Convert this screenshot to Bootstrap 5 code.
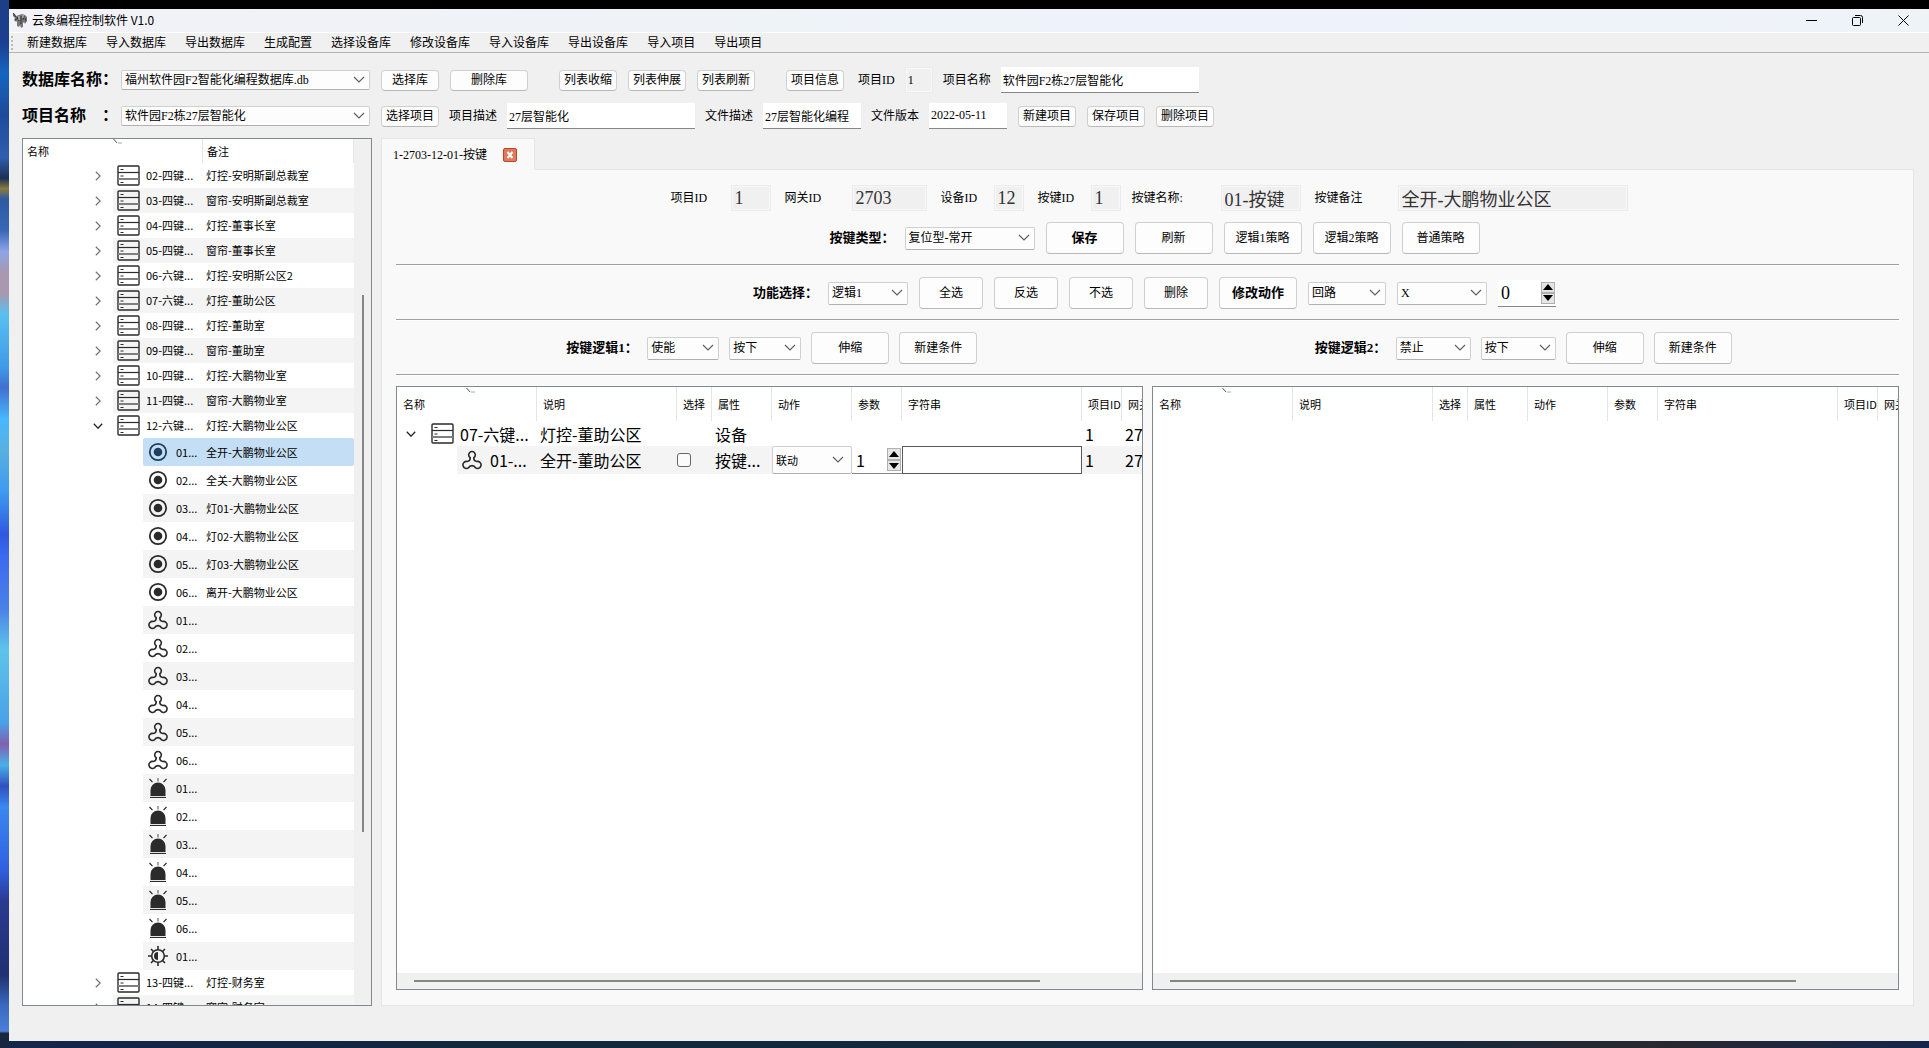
<!DOCTYPE html>
<html lang="zh-CN">
<head>
<meta charset="utf-8">
<meta name="viewport" content="width=device-width, initial-scale=1">
<title>云象编程控制软件 V1.0</title>
<link href="https://cdn.jsdelivr.net/npm/bootstrap@5.3.0/dist/css/bootstrap.min.css" rel="stylesheet">
<style>
  :root {
    --song: "Liberation Serif", "Noto Sans CJK SC", serif;
    --hei: "Noto Sans CJK SC", "Noto Sans", sans-serif;
  }
  body { margin: 0; font-family: var(--song); font-size: 12px; line-height: 16px; color: #000; }

  /* desktop behind the window */
  .desktop {
    height: 100vh; padding: 9px 0 7px 9px; overflow: hidden;
    background:
      linear-gradient(#000, #000) 9px 0 / 100% 9px no-repeat,
      linear-gradient(90deg, #14264a, #12283c 25%, #122a40 70%, #2a2830 85%, #14264a) 9px 100% / 100% 7px no-repeat,
      linear-gradient(#1c3f86 0, #1b3f90 4%, #1565c0 7%, #1e4a9a 11%, #2f5fb0 15%, #1b2f55 17%, #8a7a40 18%, #2d5aa0 19%, #3a66b8 22%, #8ea4e8 24%, #a898b0 26%, #a898b0 28%, #5ac0f0 30%, #3f9ae8 35%, #4070d0 37%, #48b8ff 40%, #58b0e0 43%, #3d9af0 47%, #3058e0 51%, #3a6af0 53%, #4a80e8 58%, #5ec4ea 62%, #4aa0e8 69%, #8060b0 71%, #4ab0e8 73%, #3050c0 75%, #3a88f0 77%, #3060e0 83%, #2a3a90 86%, #203070 93%, #3a6ac0 96%, #4a80d8 98.4%, #1a2540 98.6%);
  }
  .app-window { height: 100%; background: #f0f0f0; }

  .title-bar { height: 24px; padding: 0 3px; background: linear-gradient(90deg, #f2f2f8, #eef3f8 40%, #eef2fb 60%, #eef3f8); border-bottom: 1px solid #fff; font-family: var(--hei); }
  .caption-btn { width: 46px; height: 20px; padding: 0; border: 0; background: none; line-height: 0; color: #000; }
  .menu-strip { height: 21px; gap: 19px; padding: 2px 0 0 2px; border-bottom: 1px solid #b4b4b4; }
  .menu-strip a { color: #000; text-decoration: none; }
  .grip { width: 2px; height: 14px; margin-right: -5px; background: repeating-linear-gradient(#bbb 0 2px, transparent 2px 4px); }

  .workspace { padding: 14px 15px 35px 13px; gap: 9px; min-height: 0; }
  .top-bars { gap: 10px; }
  .work-area { gap: 9px; min-height: 0; }
  .bar { gap: 11px; }
  .bar.tight { gap: 10px; }
  .top-bar { height: 26px; }
  .lead-label { width: 96px; margin-right: -8px; font-size: 16px; font-weight: 700; white-space: nowrap; }
  .fld-label { margin: 0 -1px; white-space: nowrap; }
  .spacer-s { width: 9px; }

  /* controls */
  .ui-btn { height: 32px; width: 78px; padding: 0; border: 1px solid #d0d0d0; border-bottom-color: #b8b8b8; border-radius: 4px; background: #fdfdfd; font-size: 12px; line-height: 16px; color: #000; white-space: nowrap; }
  .ui-btn:hover { background: #f2f8fd; }
  .ui-btn.strong { font-size: 13px; font-weight: 700; }
  .top-bar .ui-btn { height: 21px; }
  .ui-btn.sm-w { width: 58px; }
  .ui-btn.md-w { width: 64px; }
  .ui-select { height: 23px; padding: 0 24px 0 3px; border: 1px solid #d0d0d0; border-bottom-color: #b0b0b0; border-radius: 2px; appearance: none; font: 12px/16px var(--song); color: #000;
    background: #fdfdfd url("data:image/svg+xml,%3Csvg xmlns='http://www.w3.org/2000/svg' width='12' height='8'%3E%3Cpath d='M1 1l5 5 5-5' fill='none' stroke='%23606060' stroke-width='1.2'/%3E%3C/svg%3E") right 4px center no-repeat; }
  .top-bar .ui-select { height: 20px; width: 249px; }
  .ui-text { height: 26px; padding: 0 2px; border: 0; border-bottom: 1px solid #868686; background: #fff; font: 12px/16px var(--song); color: #000; min-width: 0; }
  .ui-text[readonly] { border: 1px solid #ebebeb; background: #f0f0f0; box-shadow: inset 0 0 0 1px #f8f8f8; }
  .ui-text.big { padding: 0 3px; font-size: 18px; line-height: 22px; color: #333; }
  .w28 { width: 28px; } .w30 { width: 30px; } .w40 { width: 40px; } .w45 { width: 45px; } .w52 { width: 52px; } .w59 { width: 59px; }
  .w72 { width: 72px; } .w75 { width: 75px; } .w78 { width: 78px; } .w80 { width: 80px; } .w90 { width: 90px; }
  .w98 { width: 98px; } .w130 { width: 130px; } .w188 { width: 188px; } .w198 { width: 198px; } .w230 { width: 230px; }
  .bold-label { width: 78px; padding-left: 14px; font-size: 13px; font-weight: 700; white-space: nowrap; }
  .bold-label.logic { width: 71px; padding-left: 0; }

  .spin { width: 58px; height: 27px; background: #fff; border-bottom: 1px solid #868686; }
  .spin input { width: 100%; min-width: 0; padding: 0 3px; border: 0; background: none; font: 18px/22px var(--song); appearance: textfield; }
  .spin input::-webkit-inner-spin-button { appearance: none; margin: 0; }
  .spin-keys { width: 14px; margin: 2px 1px; flex: none; }
  .spin-keys button { flex: 1; padding: 0 1px; border: 1px solid #b0b0b0; background: #e6e6e6; line-height: 0; }

  /* project tree */
  .frame { border: 1px solid #828790; background: #fff; }
  .tree-panel { width: 350px; flex: none; font: 11px/15px var(--hei); }
  .tree-head { height: 24px; position: relative; }
  .tree-head span { padding-left: 4px; line-height: 24px; border-right: 1px solid #e5e5e5; }
  .tree-head .c1 { width: 180px; }
  .sort-mark { position: absolute; left: 90px; top: 0; }
  .tree-list, .tree-list ul { list-style: none; margin: 0; padding: 0; }
  .dev, .leaf { display: flex; align-items: center; }
  .dev { height: 25px; }
  .leaf { height: 28px; margin-left: 120px; padding-left: 5px; }
  .twist { width: 90px; height: 25px; padding: 0 0 0 60px; border: 0; background: none; line-height: 0; text-align: center; }
  .dev .line { flex: 1; height: 25px; padding-left: 4px; display: flex; align-items: center; }
  .dev svg.ic { width: 23px; height: 21px; margin-right: 6px; flex: none; }
  .leaf svg.ic { width: 20px; height: 20px; margin-right: 8px; flex: none; }
  .dev .nm { width: 60px; } .leaf .nm { width: 30px; }
  .alt > .line, .leaf.alt { background: #f4f4f4; }
  .leaf.chosen { background: #c4dff5; border-radius: 2px; color: #000; }
  .leaf.chosen svg { color: #1f3f5f; }
  .ic { color: #2b2b2b; }
  .v-gutter { width: 17px; background: #f0f0f0; }
  .v-gutter .before { flex: 156; } .v-gutter .thumb { flex: 536; width: 2px; margin-left: 8px; background: #868686; } .v-gutter .after { flex: 173; }

  /* document pane */
  .doc-area { min-width: 0; }
  .doc-tab { width: 154px; height: 32px; padding-left: 11px; gap: 9px; margin-bottom: -1px; border: 1px solid #e5e5e5; border-bottom: 0; background: #f9f9f9; position: relative; z-index: 1; white-space: nowrap; }
  .doc-tab span { width: 101px; }
  .tab-close { width: 14px; height: 14px; padding: 0; border: 0; background: none; line-height: 0; }
  .doc-pane { padding: 15px 14px 15px; border: 1px solid #e5e5e5; background: #f9f9f9; min-height: 0; }
  .rule { height: 2px; margin: 10px 0 11px; border: 0; border-top: 1px solid #a0a0a0; border-bottom: 1px solid #fff; opacity: 1; }
  .rule.last { margin-bottom: 10px; }
  .ident { margin-bottom: 11px; }
  .ident label { padding-left: 3px; white-space: nowrap; }
  .ident label.w78 { padding-left: 0; }

  .grids { gap: 9px; min-height: 0; }
  .grid-frame { flex: 1 1 0; min-width: 0; position: relative; }
  .grid-scroll { overflow: hidden; min-height: 0; }
  .act-table { table-layout: fixed; width: 825px; border-collapse: separate; border-spacing: 0; font: 16px/22px var(--hei); }
  .act-table .c-name { width: 140px; } .act-table .c-sel { width: 35px; } .act-table .c-attr { width: 60px; }
  .act-table .c-act { width: 80px; } .act-table .c-par { width: 50px; } .act-table .c-str { width: 180px; }
  .act-table .c-pid { width: 40px; } .act-table .c-gw { width: 100px; }
  .act-table th { height: 34px; padding: 0 0 0 6px; font-size: 11px; line-height: 15px; font-weight: 400; border-right: 1px solid #e5e5e5; overflow: hidden; white-space: nowrap; vertical-align: middle; }
  .act-table td { padding: 0 0 0 3px; white-space: nowrap; overflow: hidden; vertical-align: middle; }
  .act-table td.flush { padding: 0; }
  .act-table tr.r-dev { height: 25px; } .act-table tr.r-act { height: 28px; }
  .r-act td { background: #f4f4f4; }
  .r-act td:first-child { background: linear-gradient(90deg, #fff 60px, #f4f4f4 60px); }
  .act-table .twist { width: 28px; padding: 0; margin-right: 6px; }
  .act-table svg.dv { width: 23px; height: 21px; margin-right: 6px; flex: none; }
  .act-table svg.fn { width: 20px; height: 20px; margin: 0 8px 0 65px; flex: none; }
  .act-table .ui-select { display: block; width: 80px; height: 28px; font: 11px/15px var(--hei); background-position: right 7px center; }
  .act-table .spin { width: 50px; height: 28px; }
  .act-table .spin input { font: 16px/22px var(--hei); padding: 0 4px; }
  .act-table .str { display: block; width: 180px; height: 28px; padding: 0 3px; border: 1px solid #5a5a5a; background: #fff; }
  .act-table .pick { display: block; width: 14px; height: 14px; margin: 0; appearance: none; border: 1px solid #666; border-radius: 3px; background: #fbfbfb; }
  .grid-frame .sort-mark { left: 69px; top: 1px; }
  .h-gutter { height: 16px; flex: none; background: #f0f0f0; padding: 7px 0; }
  .h-gutter .before { flex: 17; } .h-gutter .thumb { flex: 626; background: #868686; } .h-gutter .after { flex: 102; }
</style>
<script src="https://cdn.jsdelivr.net/npm/bootstrap@5.3.0/dist/js/bootstrap.bundle.min.js"></script>
</head>
<body>
<svg class="d-none" aria-hidden="true">
  <symbol id="i-dev" viewBox="0 0 23 21"><rect x="1" y="1" width="21" height="19" rx="1" fill="none" stroke="currentColor" stroke-width="1.4"/><path d="M1 7.500h21" stroke="currentColor" stroke-width="1.200"/><path d="M1 14h21" stroke="#808080" stroke-width="2"/><path d="M3.500 4.500h3M3.500 11h3M3.500 17.500h3" stroke="currentColor" stroke-width="1"/></symbol>
  <symbol id="i-key" viewBox="0 0 20 20"><circle cx="10" cy="10" r="8.200" fill="none" stroke="currentColor" stroke-width="1.800"/><circle cx="10" cy="10" r="4.300" fill="currentColor"/></symbol>
  <symbol id="i-fan" viewBox="0 0 20 20"><path d="M8.200 7.600A3.300 3.300 0 1 1 11.800 7.600C11.700 9.800 12.800 11.200 14.800 11.500A3.500 3.500 0 1 1 13.300 17.600C12.300 14.900 7.700 14.900 6.700 17.600A3.500 3.500 0 1 1 5.200 11.500C7.200 11.200 8.300 9.800 8.200 7.600Z" fill="none" stroke="currentColor" stroke-width="1.600" stroke-linejoin="round"/></symbol>
  <symbol id="i-alarm" viewBox="0 0 20 20"><path d="M2.500 18v-6a7.500 7.500 0 0 1 15 0v6z" fill="currentColor"/><path d="M2 19.500h16" stroke="currentColor" stroke-width="1.200"/><path d="M1.500 1l3 3.200M18.500 1l-3 3.200" stroke="currentColor" stroke-width="1.200"/><path d="M10 0v3.500" stroke="#777" stroke-width="1.300"/></symbol>
  <symbol id="i-dim" viewBox="0 0 20 20"><circle cx="10" cy="10" r="6.300" fill="none" stroke="currentColor" stroke-width="1.600"/><path d="M10 6a4 4 0 0 0 0 8z" fill="currentColor"/><path d="M10 0v4M10 16v4M0 10h4M16 10h4M3 3l2.700 2.700M14.300 14.300L17 17M17 3l-2.700 2.700M5.700 14.300L3 17" stroke="currentColor" stroke-width="1.600"/></symbol>
  <symbol id="i-right" viewBox="0 0 6 10"><path d="M.8.8L5.200 5 .8 9.200" fill="none" stroke="#707070" stroke-width="1.200"/></symbol>
  <symbol id="i-down" viewBox="0 0 10 6"><path d="M.8.8L5 5.200 9.200.8" fill="none" stroke="#222" stroke-width="1.300"/></symbol>
  <symbol id="i-sort" viewBox="0 0 9 5"><path d="M.5 0l3.500 4M5.500 4h1M7.500 4h1" stroke="#555" fill="none"/></symbol>
  <symbol id="i-up" viewBox="0 0 10 6"><path d="M5 0l5 6H0z"/></symbol>
  <symbol id="i-dn" viewBox="0 0 10 6"><path d="M5 6L0 0h10z"/></symbol>
</svg>

<div class="desktop">
<div class="app-window d-flex flex-column">
  <header class="title-bar d-flex align-items-center">
    <svg width="16" height="16" viewBox="0 0 16 16" class="me-1" aria-hidden="true"><path d="M1 1l2 1 1 2 3-1 3-1 3 1 2 2v4l-2 3-1-2-1 1v4l-2 1-1-3-1 2-2-1V9L4 10 2 8l1-2-2-2z" fill="#777"/><path d="M1 1l3 4M5 5l2 4M9 4v8M12 4l-1 4M3 8l3-2M13 6l1 3" stroke="#333" fill="none"/><path d="M7 4v4M11 3v3" stroke="#ccc" fill="none"/></svg>
    <span>云象编程控制软件 V1.0</span>
    <div class="ms-auto d-flex">
      <button class="caption-btn" type="button" aria-label="最小化"><svg width="11" height="11"><path d="M0 5.500h11" stroke="#000"/></svg></button>
      <button class="caption-btn" type="button" aria-label="还原"><svg width="11" height="11" fill="none" stroke="#000"><rect x=".5" y="2.500" width="8" height="8" rx="1"/><path d="M3 .5h5.500a2 2 0 0 1 2 2V8"/></svg></button>
      <button class="caption-btn" type="button" aria-label="关闭"><svg width="11" height="11"><path d="M.5.5l10 10M10.500.5l-10 10" stroke="#000"/></svg></button>
    </div>
  </header>

  <nav class="menu-strip d-flex align-items-center" aria-label="工具栏">
    <span class="grip"></span>
    <a href="#">新建数据库</a><a href="#">导入数据库</a><a href="#">导出数据库</a><a href="#">生成配置</a><a href="#">选择设备库</a><a href="#">修改设备库</a><a href="#">导入设备库</a><a href="#">导出设备库</a><a href="#">导入项目</a><a href="#">导出项目</a>
  </nav>

  <main class="workspace d-flex flex-column flex-grow-1">
    <div class="top-bars d-flex flex-column">
      <div class="bar top-bar d-flex align-items-center">
        <label class="lead-label" for="db">数据库名称：</label>
        <select class="ui-select" id="db"><option>福州软件园F2智能化编程数据库.db</option></select>
        <button class="ui-btn sm-w" type="button">选择库</button>
        <button class="ui-btn" type="button">删除库</button>
        <span class="spacer-s"></span>
        <button class="ui-btn sm-w" type="button">列表收缩</button>
        <button class="ui-btn sm-w" type="button">列表伸展</button>
        <button class="ui-btn sm-w" type="button">列表刷新</button>
        <span class="spacer-s"></span>
        <button class="ui-btn sm-w" type="button">项目信息</button>
        <label class="fld-label ps-1" for="pid">项目ID</label>
        <input class="ui-text w28" id="pid" value="1" readonly>
        <label class="fld-label" for="pname">项目名称</label>
        <input class="ui-text w198" id="pname" value="软件园F2栋27层智能化">
      </div>
      <div class="bar top-bar d-flex align-items-center">
        <label class="lead-label d-flex justify-content-between" for="proj"><span>项目名称</span><span>：</span></label>
        <select class="ui-select" id="proj"><option>软件园F2栋27层智能化</option></select>
        <button class="ui-btn sm-w" type="button">选择项目</button>
        <label class="fld-label" for="pdesc">项目描述</label>
        <input class="ui-text w188" id="pdesc" value="27层智能化">
        <label class="fld-label" for="fdesc">文件描述</label>
        <input class="ui-text w98" id="fdesc" value="27层智能化编程">
        <label class="fld-label" for="fver">文件版本</label>
        <input class="ui-text w78" id="fver" value="2022-05-11">
        <button class="ui-btn sm-w" type="button">新建项目</button>
        <button class="ui-btn sm-w" type="button">保存项目</button>
        <button class="ui-btn sm-w" type="button">删除项目</button>
      </div>
    </div>

    <div class="work-area d-flex flex-grow-1">
      <aside class="tree-panel frame d-flex">
        <div class="flex-grow-1 overflow-hidden">
          <div class="tree-head d-flex"><span class="c1">名称</span><span class="flex-grow-1">备注</span><svg class="sort-mark" width="9" height="5"><use href="#i-sort"/></svg></div>
          <ul class="tree-list">
            <li class="dev"><button class="twist" type="button" aria-label="展开"><svg width="6" height="10"><use href="#i-right"/></svg></button><div class="line"><svg class="ic"><use href="#i-dev"/></svg><span class="nm">02-四键...</span><span>灯控-安明斯副总裁室</span></div></li>
            <li class="dev alt"><button class="twist" type="button" aria-label="展开"><svg width="6" height="10"><use href="#i-right"/></svg></button><div class="line"><svg class="ic"><use href="#i-dev"/></svg><span class="nm">03-四键...</span><span>窗帘-安明斯副总裁室</span></div></li>
            <li class="dev"><button class="twist" type="button" aria-label="展开"><svg width="6" height="10"><use href="#i-right"/></svg></button><div class="line"><svg class="ic"><use href="#i-dev"/></svg><span class="nm">04-四键...</span><span>灯控-董事长室</span></div></li>
            <li class="dev alt"><button class="twist" type="button" aria-label="展开"><svg width="6" height="10"><use href="#i-right"/></svg></button><div class="line"><svg class="ic"><use href="#i-dev"/></svg><span class="nm">05-四键...</span><span>窗帘-董事长室</span></div></li>
            <li class="dev"><button class="twist" type="button" aria-label="展开"><svg width="6" height="10"><use href="#i-right"/></svg></button><div class="line"><svg class="ic"><use href="#i-dev"/></svg><span class="nm">06-六键...</span><span>灯控-安明斯公区2</span></div></li>
            <li class="dev alt"><button class="twist" type="button" aria-label="展开"><svg width="6" height="10"><use href="#i-right"/></svg></button><div class="line"><svg class="ic"><use href="#i-dev"/></svg><span class="nm">07-六键...</span><span>灯控-董助公区</span></div></li>
            <li class="dev"><button class="twist" type="button" aria-label="展开"><svg width="6" height="10"><use href="#i-right"/></svg></button><div class="line"><svg class="ic"><use href="#i-dev"/></svg><span class="nm">08-四键...</span><span>灯控-董助室</span></div></li>
            <li class="dev alt"><button class="twist" type="button" aria-label="展开"><svg width="6" height="10"><use href="#i-right"/></svg></button><div class="line"><svg class="ic"><use href="#i-dev"/></svg><span class="nm">09-四键...</span><span>窗帘-董助室</span></div></li>
            <li class="dev"><button class="twist" type="button" aria-label="展开"><svg width="6" height="10"><use href="#i-right"/></svg></button><div class="line"><svg class="ic"><use href="#i-dev"/></svg><span class="nm">10-四键...</span><span>灯控-大鹏物业室</span></div></li>
            <li class="dev alt"><button class="twist" type="button" aria-label="展开"><svg width="6" height="10"><use href="#i-right"/></svg></button><div class="line"><svg class="ic"><use href="#i-dev"/></svg><span class="nm">11-四键...</span><span>窗帘-大鹏物业室</span></div></li>
            <li>
              <div class="dev"><button class="twist" type="button" aria-label="折叠"><svg width="10" height="6"><use href="#i-down"/></svg></button><div class="line"><svg class="ic"><use href="#i-dev"/></svg><span class="nm">12-六键...</span><span>灯控-大鹏物业公区</span></div></div>
              <ul>
                <li class="leaf chosen"><svg class="ic"><use href="#i-key"/></svg><span class="nm">01...</span><span>全开-大鹏物业公区</span></li>
                <li class="leaf"><svg class="ic"><use href="#i-key"/></svg><span class="nm">02...</span><span>全关-大鹏物业公区</span></li>
                <li class="leaf alt"><svg class="ic"><use href="#i-key"/></svg><span class="nm">03...</span><span>灯01-大鹏物业公区</span></li>
                <li class="leaf"><svg class="ic"><use href="#i-key"/></svg><span class="nm">04...</span><span>灯02-大鹏物业公区</span></li>
                <li class="leaf alt"><svg class="ic"><use href="#i-key"/></svg><span class="nm">05...</span><span>灯03-大鹏物业公区</span></li>
                <li class="leaf"><svg class="ic"><use href="#i-key"/></svg><span class="nm">06...</span><span>离开-大鹏物业公区</span></li>
                <li class="leaf alt"><svg class="ic"><use href="#i-fan"/></svg><span class="nm">01...</span></li>
                <li class="leaf"><svg class="ic"><use href="#i-fan"/></svg><span class="nm">02...</span></li>
                <li class="leaf alt"><svg class="ic"><use href="#i-fan"/></svg><span class="nm">03...</span></li>
                <li class="leaf"><svg class="ic"><use href="#i-fan"/></svg><span class="nm">04...</span></li>
                <li class="leaf alt"><svg class="ic"><use href="#i-fan"/></svg><span class="nm">05...</span></li>
                <li class="leaf"><svg class="ic"><use href="#i-fan"/></svg><span class="nm">06...</span></li>
                <li class="leaf alt"><svg class="ic"><use href="#i-alarm"/></svg><span class="nm">01...</span></li>
                <li class="leaf"><svg class="ic"><use href="#i-alarm"/></svg><span class="nm">02...</span></li>
                <li class="leaf alt"><svg class="ic"><use href="#i-alarm"/></svg><span class="nm">03...</span></li>
                <li class="leaf"><svg class="ic"><use href="#i-alarm"/></svg><span class="nm">04...</span></li>
                <li class="leaf alt"><svg class="ic"><use href="#i-alarm"/></svg><span class="nm">05...</span></li>
                <li class="leaf"><svg class="ic"><use href="#i-alarm"/></svg><span class="nm">06...</span></li>
                <li class="leaf alt"><svg class="ic"><use href="#i-dim"/></svg><span class="nm">01...</span></li>
              </ul>
            </li>
            <li class="dev"><button class="twist" type="button" aria-label="展开"><svg width="6" height="10"><use href="#i-right"/></svg></button><div class="line"><svg class="ic"><use href="#i-dev"/></svg><span class="nm">13-四键...</span><span>灯控-财务室</span></div></li>
            <li class="dev alt"><button class="twist" type="button" aria-label="展开"><svg width="6" height="10"><use href="#i-right"/></svg></button><div class="line"><svg class="ic"><use href="#i-dev"/></svg><span class="nm">14-四键...</span><span>窗帘-财务室</span></div></li>
          </ul>
        </div>
        <div class="v-gutter d-flex flex-column"><div class="before"></div><div class="thumb"></div><div class="after"></div></div>
      </aside>

      <section class="doc-area flex-grow-1 d-flex flex-column">
        <div class="doc-tab d-flex align-items-center"><span>1-2703-12-01-按键</span>
          <button class="tab-close" type="button" aria-label="关闭标签"><svg width="14" height="14"><rect x=".5" y=".5" width="13" height="13" rx="1.500" fill="#e07a5c" stroke="#c0452c"/><path d="M4.500 4l5 6M9.500 4l-5 6" stroke="#fff" stroke-width="2"/></svg></button>
        </div>
        <div class="doc-pane flex-grow-1 d-flex flex-column">
          <div class="bar ident d-flex justify-content-center align-items-center">
            <label class="w52" for="k1">项目ID</label><input class="ui-text big w40" id="k1" value="1" readonly>
            <label class="w59" for="k2">网关ID</label><input class="ui-text big w75" id="k2" value="2703" readonly>
            <label class="w45" for="k3">设备ID</label><input class="ui-text big w30" id="k3" value="12" readonly>
            <label class="w45" for="k4">按键ID</label><input class="ui-text big w30" id="k4" value="1" readonly>
            <label class="w78" for="k5">按键名称:</label><input class="ui-text big w80" id="k5" value="01-按键" readonly>
            <label class="w75" for="k6">按键备注</label><input class="ui-text big w230" id="k6" value="全开-大鹏物业公区" readonly>
          </div>
          <div class="bar d-flex justify-content-center align-items-center">
            <label class="bold-label" for="ktype">按键类型：</label>
            <select class="ui-select w130" id="ktype"><option>复位型-常开</option></select>
            <button class="ui-btn strong" type="button">保存</button>
            <button class="ui-btn" type="button">刷新</button>
            <button class="ui-btn" type="button">逻辑1策略</button>
            <button class="ui-btn" type="button">逻辑2策略</button>
            <button class="ui-btn" type="button">普通策略</button>
          </div>
          <hr class="rule">
          <div class="bar d-flex justify-content-center align-items-center">
            <label class="bold-label" for="fn">功能选择：</label>
            <select class="ui-select w80" id="fn"><option>逻辑1</option></select>
            <button class="ui-btn md-w" type="button">全选</button>
            <button class="ui-btn md-w" type="button">反选</button>
            <button class="ui-btn md-w" type="button">不选</button>
            <button class="ui-btn md-w" type="button">删除</button>
            <button class="ui-btn strong" type="button">修改动作</button>
            <select class="ui-select w78" aria-label="动作类型"><option>回路</option></select>
            <select class="ui-select w90" aria-label="动作目标"><option>X</option></select>
            <div class="spin d-flex"><input type="number" value="0" aria-label="参数"><div class="spin-keys d-flex flex-column"><button type="button" aria-label="增加"><svg width="10" height="6"><use href="#i-up"/></svg></button><button type="button" aria-label="减少"><svg width="10" height="6"><use href="#i-dn"/></svg></button></div></div>
          </div>
          <hr class="rule">
          <div class="d-flex">
            <div class="bar tight d-flex justify-content-center align-items-center w-50">
              <label class="bold-label logic" for="l1">按键逻辑1：</label>
              <select class="ui-select w72" id="l1"><option>使能</option></select>
              <select class="ui-select w72" aria-label="逻辑1触发"><option>按下</option></select>
              <button class="ui-btn" type="button">伸缩</button>
              <button class="ui-btn" type="button">新建条件</button>
            </div>
            <div class="bar tight d-flex justify-content-center align-items-center w-50">
              <label class="bold-label logic" for="l2">按键逻辑2：</label>
              <select class="ui-select w75" id="l2"><option>禁止</option></select>
              <select class="ui-select w75" aria-label="逻辑2触发"><option>按下</option></select>
              <button class="ui-btn" type="button">伸缩</button>
              <button class="ui-btn" type="button">新建条件</button>
            </div>
          </div>
          <hr class="rule last">
          <div class="grids d-flex flex-grow-1">
            <div class="grid-frame frame d-flex flex-column">
              <svg class="sort-mark" width="9" height="5"><use href="#i-sort"/></svg>
              <div class="grid-scroll flex-grow-1">
                <table class="act-table">
                  <colgroup><col class="c-name"><col class="c-name"><col class="c-sel"><col class="c-attr"><col class="c-act"><col class="c-par"><col class="c-str"><col class="c-pid"><col class="c-gw"></colgroup>
                  <thead><tr><th>名称</th><th>说明</th><th>选择</th><th>属性</th><th>动作</th><th>参数</th><th>字符串</th><th>项目ID</th><th>网关ID</th></tr></thead>
                  <tbody>
                    <tr class="r-dev"><td class="flush"><div class="d-flex align-items-center"><button class="twist" type="button" aria-label="折叠"><svg width="10" height="6"><use href="#i-down"/></svg></button><svg class="ic dv"><use href="#i-dev"/></svg>07-六键...</div></td><td>灯控-董助公区</td><td></td><td>设备</td><td></td><td></td><td></td><td>1</td><td>2703</td></tr>
                    <tr class="r-act"><td class="flush"><div class="d-flex align-items-center"><svg class="ic fn"><use href="#i-fan"/></svg>01-...</div></td><td>全开-董助公区</td><td class="flush"><input class="pick" type="checkbox" aria-label="选择"></td><td>按键...</td>
                      <td class="flush"><select class="ui-select" aria-label="动作"><option>联动</option></select></td>
                      <td class="flush"><div class="spin d-flex"><input type="number" value="1" aria-label="参数"><div class="spin-keys d-flex flex-column"><button type="button" aria-label="增加"><svg width="10" height="6"><use href="#i-up"/></svg></button><button type="button" aria-label="减少"><svg width="10" height="6"><use href="#i-dn"/></svg></button></div></div></td>
                      <td class="flush"><input class="str" type="text" aria-label="字符串"></td><td>1</td><td>2703</td></tr>
                  </tbody>
                </table>
              </div>
              <div class="h-gutter d-flex"><div class="before"></div><div class="thumb"></div><div class="after"></div></div>
            </div>
            <div class="grid-frame frame d-flex flex-column">
              <svg class="sort-mark" width="9" height="5"><use href="#i-sort"/></svg>
              <div class="grid-scroll flex-grow-1">
                <table class="act-table">
                  <colgroup><col class="c-name"><col class="c-name"><col class="c-sel"><col class="c-attr"><col class="c-act"><col class="c-par"><col class="c-str"><col class="c-pid"><col class="c-gw"></colgroup>
                  <thead><tr><th>名称</th><th>说明</th><th>选择</th><th>属性</th><th>动作</th><th>参数</th><th>字符串</th><th>项目ID</th><th>网关ID</th></tr></thead>
                  <tbody></tbody>
                </table>
              </div>
              <div class="h-gutter d-flex"><div class="before"></div><div class="thumb"></div><div class="after"></div></div>
            </div>
          </div>
        </div>
      </section>
    </div>
  </main>
</div>
</div>
</body>
</html>
